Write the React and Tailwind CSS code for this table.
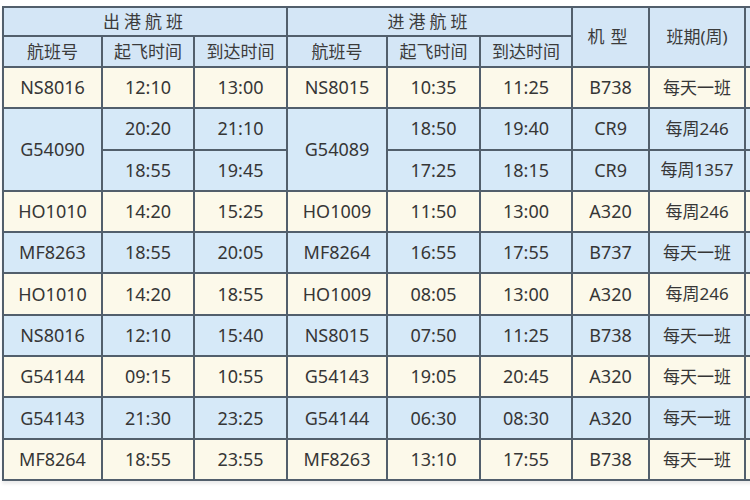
import React from "react";

const font = { fontFamily: '"Noto Sans", "Noto Sans CJK SC", sans-serif' };

const rows = [
  { out: "NS8016", t: [["12:10", "13:00", "10:35", "11:25", "B738", "每天一班"]], inn: "NS8015" },
  {
    out: "G54090",
    inn: "G54089",
    t: [
      ["20:20", "21:10", "18:50", "19:40", "CR9", "每周246"],
      ["18:55", "19:45", "17:25", "18:15", "CR9", "每周1357"],
    ],
  },
  { out: "HO1010", t: [["14:20", "15:25", "11:50", "13:00", "A320", "每周246"]], inn: "HO1009" },
  { out: "MF8263", t: [["18:55", "20:05", "16:55", "17:55", "B737", "每天一班"]], inn: "MF8264" },
  { out: "HO1010", t: [["14:20", "18:55", "08:05", "13:00", "A320", "每周246"]], inn: "HO1009" },
  { out: "NS8016", t: [["12:10", "15:40", "07:50", "11:25", "B738", "每天一班"]], inn: "NS8015" },
  { out: "G54144", t: [["09:15", "10:55", "19:05", "20:45", "A320", "每天一班"]], inn: "G54143" },
  { out: "G54143", t: [["21:30", "23:25", "06:30", "08:30", "A320", "每天一班"]], inn: "G54144" },
  { out: "MF8264", t: [["18:55", "23:55", "13:10", "17:55", "B738", "每天一班"]], inn: "MF8263" },
];

const cell = "border-2 border-[#525f6c] text-center align-middle p-0";
const th = cell + " font-normal text-[17px] text-[#3b3b3b]";

export default function App() {
  return (
    <div className="w-[750px] h-[500px] overflow-hidden bg-white" style={font}>
      <table className="table-fixed border-collapse ml-[2px] mt-[6px] w-[762px] text-[#363636] text-[18px] shadow-[0_3px_3px_rgba(0,0,0,0.08)]">
        <colgroup>
          <col className="w-[99px]" />
          <col className="w-[92px]" />
          <col className="w-[93px]" />
          <col className="w-[100px]" />
          <col className="w-[93px]" />
          <col className="w-[92px]" />
          <col className="w-[77px]" />
          <col className="w-[96px]" />
          <col className="w-[20px]" />
        </colgroup>
        <thead className="bg-[#d4e6f6]">
          <tr className="h-[29px]">
            <th colSpan={3} className={th + " tracking-[4px]"}>出港航班</th>
            <th colSpan={3} className={th + " tracking-[4px]"}>进港航班</th>
            <th rowSpan={2} className={th + " tracking-[6px]"}>机型</th>
            <th rowSpan={2} className={th}>班期(周)</th>
            <th rowSpan={2} className={th}></th>
          </tr>
          <tr className="h-[31px]">
            <th className={th}>航班号</th>
            <th className={th}>起飞时间</th>
            <th className={th}>到达时间</th>
            <th className={th}>航班号</th>
            <th className={th}>起飞时间</th>
            <th className={th}>到达时间</th>
          </tr>
        </thead>
        <tbody>
          {rows.map((r, i) => {
            const bg = i % 2 === 0 ? "bg-[#fcf9ea]" : "bg-[#d6e9f8]";
            return r.t.map((t, j) => (
              <tr key={i + "-" + j} className={bg + " h-[41.3px]"}>
                {j === 0 && (
                  <td rowSpan={r.t.length} className={cell}>
                    {r.out}
                  </td>
                )}
                <td className={cell}>{t[0]}</td>
                <td className={cell}>{t[1]}</td>
                {j === 0 && (
                  <td rowSpan={r.t.length} className={cell}>
                    {r.inn}
                  </td>
                )}
                <td className={cell}>{t[2]}</td>
                <td className={cell}>{t[3]}</td>
                <td className={cell}>{t[4]}</td>
                <td className={cell + " text-[17px]"}>{t[5]}</td>
                <td className={cell}></td>
              </tr>
            ));
          })}
        </tbody>
      </table>
    </div>
  );
}
